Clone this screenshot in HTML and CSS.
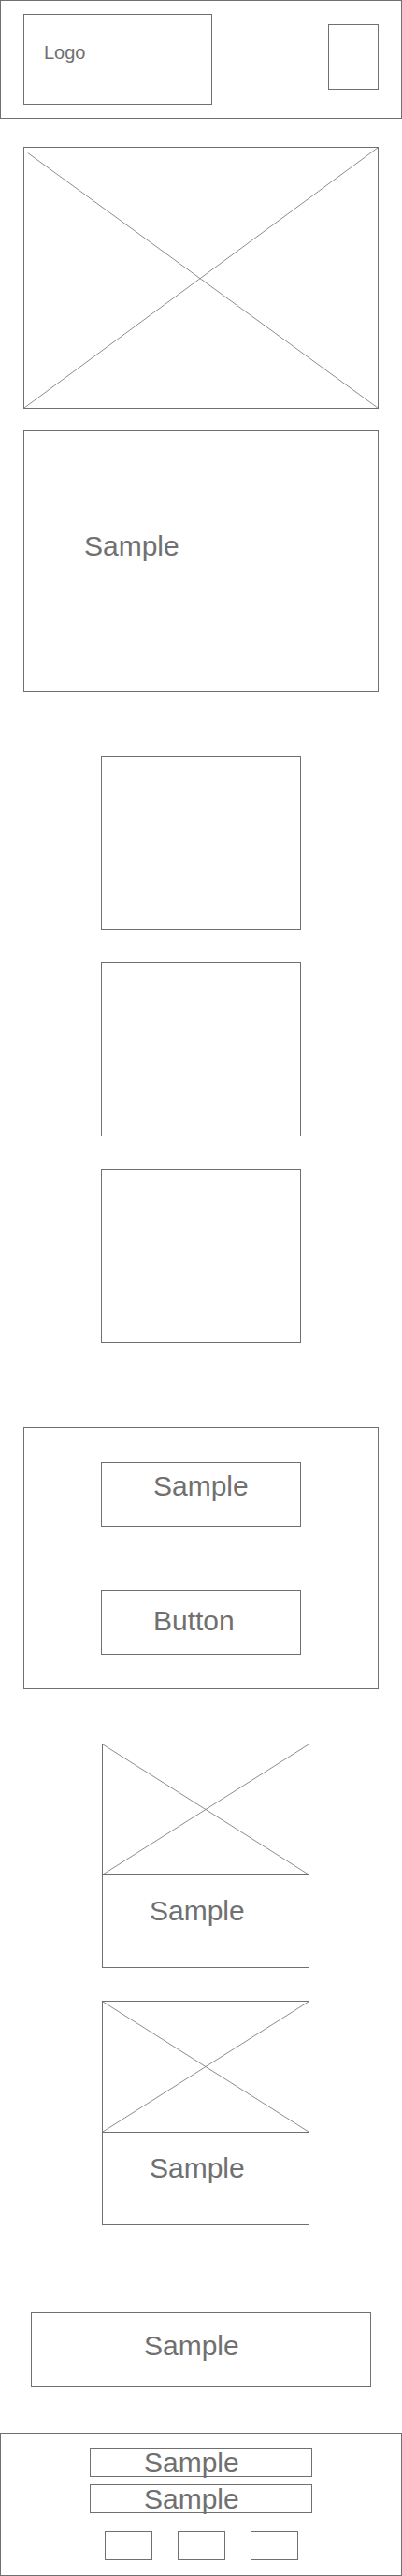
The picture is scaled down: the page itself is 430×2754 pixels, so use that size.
FILE: index.html
```html
<!DOCTYPE html>
<html lang="en">
<head>
    <meta charset="UTF-8">
    <meta name="viewport" content="width=device-width, initial-scale=1.0">
    <title>Wireframe</title>
    <link rel="stylesheet" href="styles.css">
</head>
<body>
    <header class="header">
        <div class="logo">Logo</div>
        <div class="menu-box"></div>
    </header>

    <div class="hero-image">
        <svg class="cross" viewBox="0 0 100 100" preserveAspectRatio="none">
            <line x1="1" y1="2" x2="101" y2="101" />
            <line x1="0" y1="100" x2="100" y2="0" />
        </svg>
    </div>

    <div class="hero-text">Sample</div>

    <div class="tiles">
        <div class="tile"></div>
        <div class="tile"></div>
        <div class="tile"></div>
    </div>

    <div class="form-box">
        <div class="field">Sample</div>
        <div class="button">Button</div>
    </div>

    <div class="card first">
        <div class="card-image">
            <svg class="cross" viewBox="0 0 100 100" preserveAspectRatio="none">
                <line x1="0" y1="0" x2="100" y2="100" />
                <line x1="0" y1="100" x2="100" y2="0" />
            </svg>
        </div>
        <div class="card-text">Sample</div>
    </div>
    <div class="card">
        <div class="card-image">
            <svg class="cross" viewBox="0 0 100 100" preserveAspectRatio="none">
                <line x1="0" y1="0" x2="100" y2="100" />
                <line x1="0" y1="100" x2="100" y2="0" />
            </svg>
        </div>
        <div class="card-text">Sample</div>
    </div>

    <div class="bar">Sample</div>

    <footer class="footer">
        <div class="footer-line">Sample</div>
        <div class="footer-line">Sample</div>
        <div class="footer-icons">
            <div class="footer-icon"></div>
            <div class="footer-icon"></div>
            <div class="footer-icon"></div>
        </div>
    </footer>
</body>
</html>
```

FILE: styles.css
```css
*{
    box-sizing: border-box;
}
body{
    margin: 0;
    background-color: #fff;
    font-family: "Liberation Sans", Arial, sans-serif;
    color: #707070;
}
.header{
    display: flex;
    justify-content: space-between;
    align-items: flex-start;
    height: 127px;
    border: 1px solid #707070;
}
.logo{
    width: 202px;
    height: 97px;
    margin: 14px 0 0 24px;
    padding: 29px 21px;
    border: 1px solid #707070;
    font-size: 20px;
}
.menu-box{
    width: 54px;
    height: 70px;
    margin: 25px 24px 0 0;
    border: 1px solid #707070;
}
.cross{
    display: block;
    width: 100%;
    height: 100%;
}
.cross line{
    stroke: #8c8c8c;
    stroke-width: 1px;
    vector-effect: non-scaling-stroke;
}
.hero-image{
    height: 280px;
    margin: 30px 25px 0 25px;
    border: 1px solid #707070;
}
.hero-text{
    height: 280px;
    margin: 23px 25px 0 25px;
    padding: 106px 0 0 64px;
    border: 1px solid #707070;
    font-size: 30px;
}
.tiles{
    display: flex;
    flex-direction: column;
    align-items: center;
    gap: 35px;
    margin-top: 68px;
}
.tile{
    width: 214px;
    height: 186px;
    border: 1px solid #707070;
}
.form-box{
    display: flex;
    flex-direction: column;
    align-items: center;
    gap: 68px;
    height: 280px;
    margin: 90px 25px 0 25px;
    padding-top: 36px;
    border: 1px solid #707070;
}
.field,
.button{
    width: 214px;
    height: 69px;
    padding-left: 55px;
    border: 1px solid #707070;
    font-size: 30px;
}
.field{
    padding-top: 8px;
}
.button{
    padding-top: 15px;
}
.card{
    width: 222px;
    height: 240px;
    margin: 35px 0 0 109px;
    border: 1px solid #707070;
}
.card.first{
    margin-top: 58px;
}
.card-image{
    height: 140px;
    border-bottom: 1px solid #707070;
}
.card-text{
    padding: 21px 0 0 50px;
    font-size: 30px;
}
.bar{
    height: 80px;
    margin: 93px 33px 0 33px;
    padding: 18px 0 0 120px;
    border: 1px solid #707070;
    font-size: 30px;
}
.footer{
    display: flex;
    flex-direction: column;
    align-items: center;
    gap: 8px;
    height: 153px;
    margin-top: 49px;
    padding-top: 15px;
    border: 1px solid #707070;
}
.footer-line{
    width: 238px;
    height: 31px;
    padding-left: 57px;
    border: 1px solid #707070;
    font-size: 30px;
    line-height: 29px;
}
.footer-icons{
    display: flex;
    gap: 27px;
    margin-top: 11px;
}
.footer-icon{
    width: 51px;
    height: 31px;
    border: 1px solid #707070;
}
```
